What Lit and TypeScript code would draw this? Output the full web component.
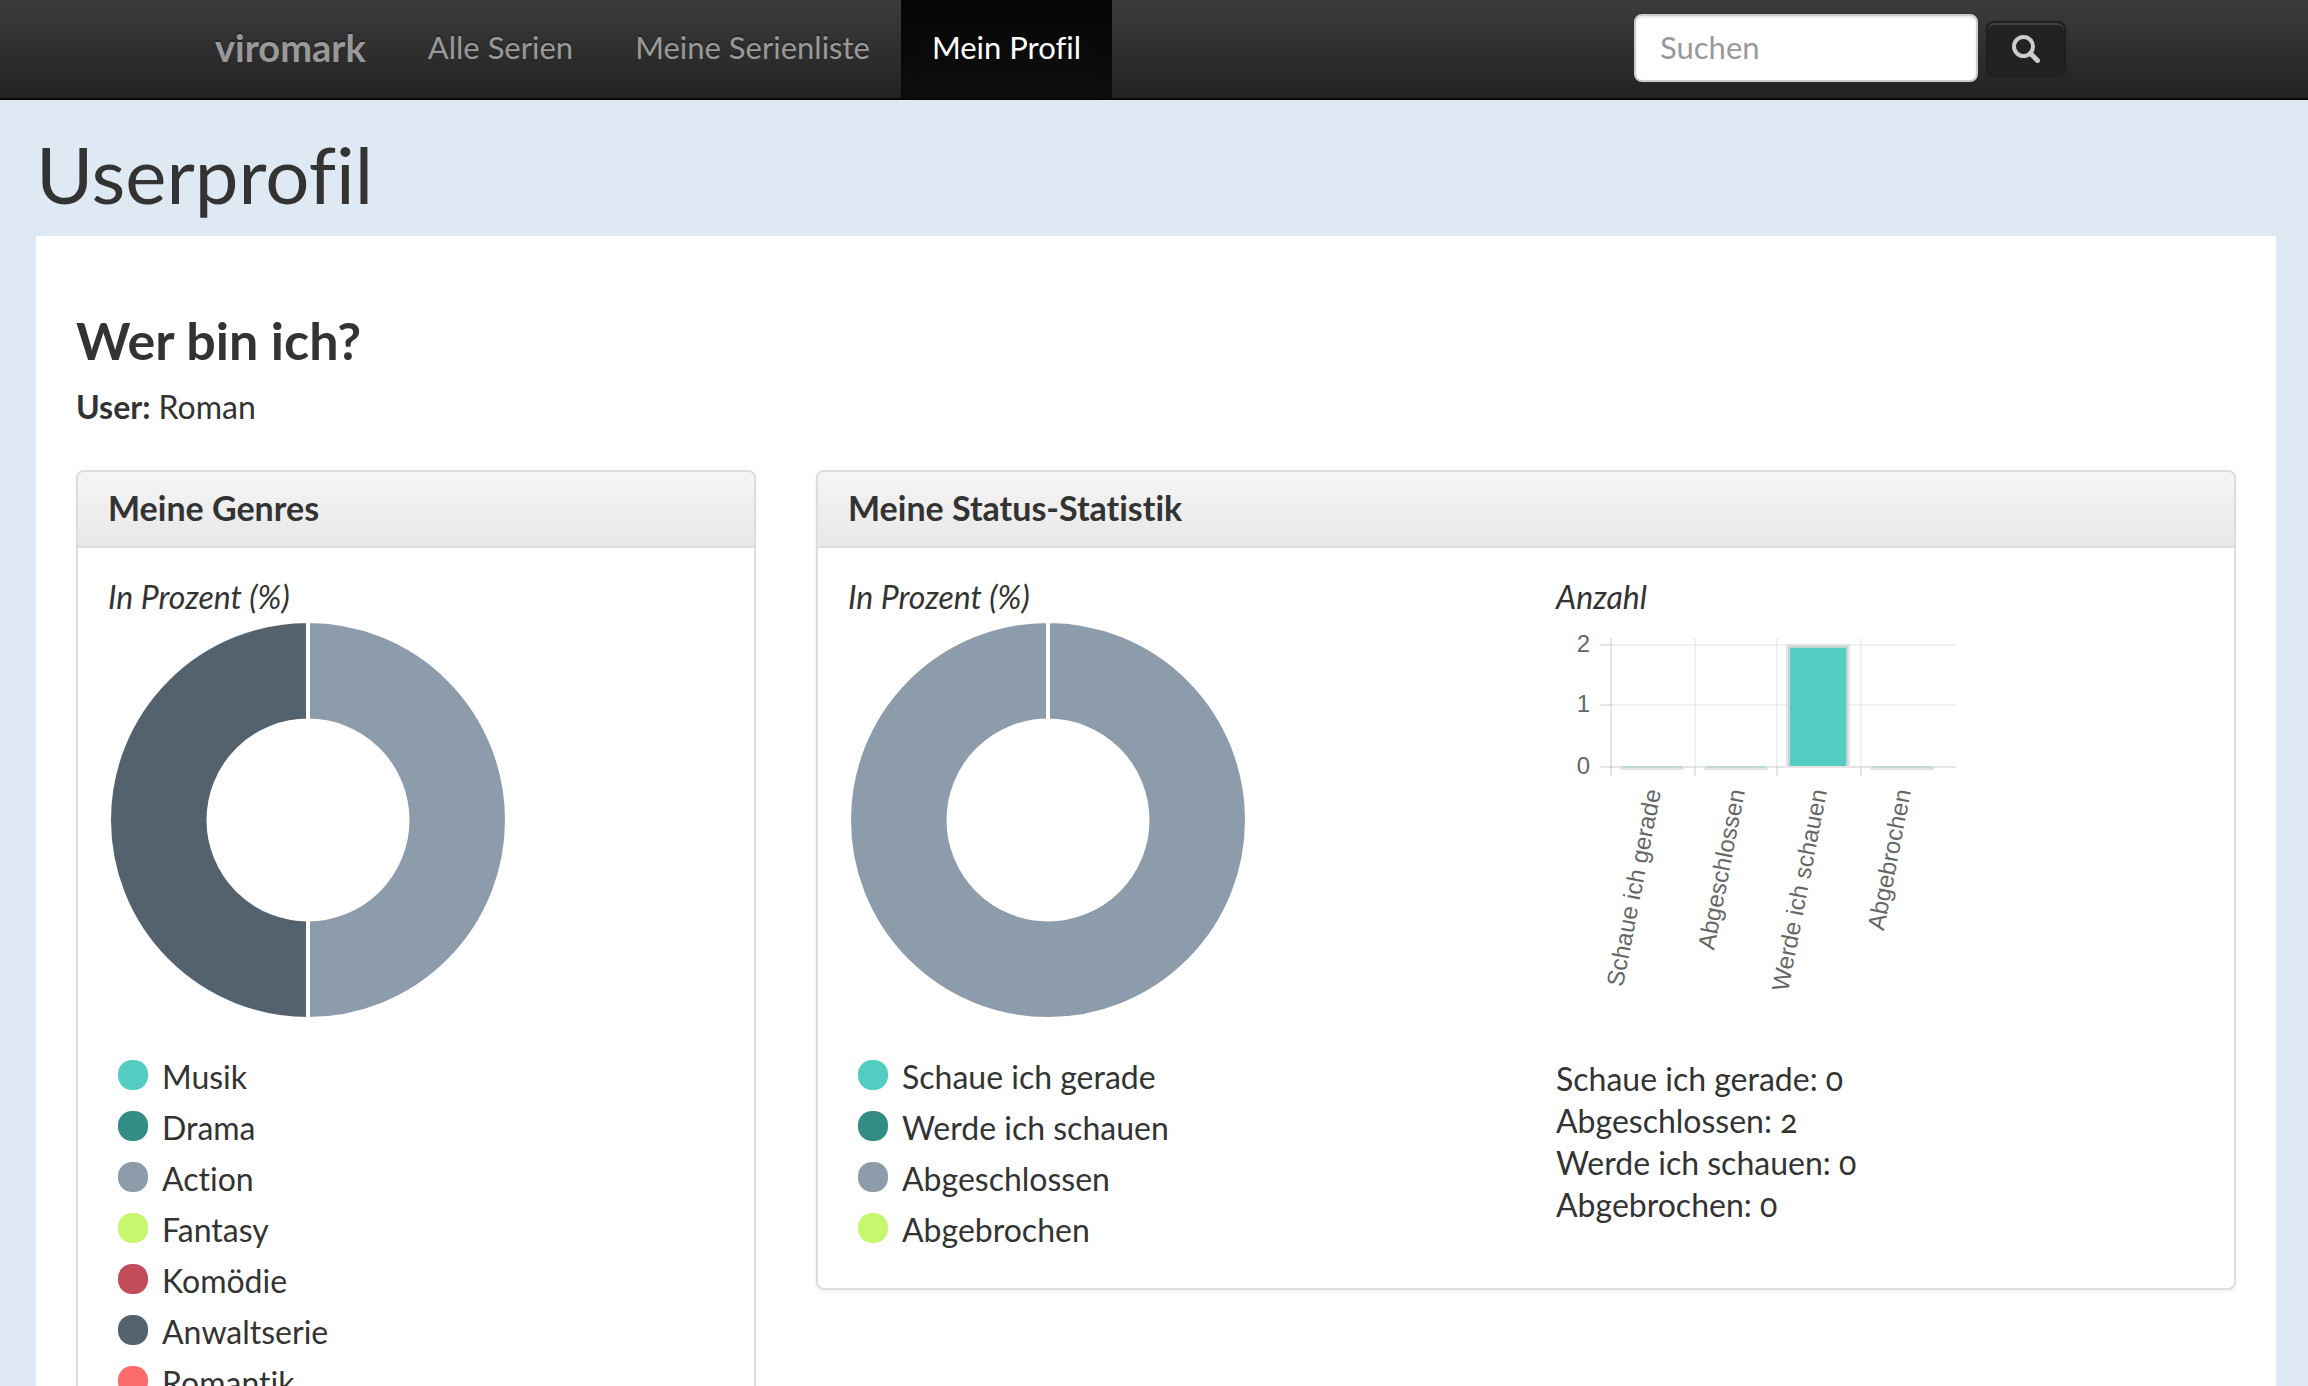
import { LitElement, html, svg, css } from "lit";
import { customElement, property } from "lit/decorators.js";

interface Segment {
  label: string;
  value: number;
  color: string;
}

const GENRES: Segment[] = [
  { label: "Musik", value: 0, color: "#53cdc2" },
  { label: "Drama", value: 0, color: "#338d85" },
  { label: "Action", value: 1, color: "#8c9cab" },
  { label: "Fantasy", value: 0, color: "#c7f76f" },
  { label: "Komödie", value: 0, color: "#c24c59" },
  { label: "Anwaltserie", value: 1, color: "#54626d" },
  { label: "Romantik", value: 0, color: "#fd6c6c" },
];

const STATUS: Segment[] = [
  { label: "Schaue ich gerade", value: 0, color: "#53cdc2" },
  { label: "Werde ich schauen", value: 0, color: "#338d85" },
  { label: "Abgeschlossen", value: 2, color: "#8c9cab" },
  { label: "Abgebrochen", value: 0, color: "#c7f76f" },
];

const COUNTS = [
  { label: "Schaue ich gerade", value: 0 },
  { label: "Abgeschlossen", value: 2 },
  { label: "Werde ich schauen", value: 0 },
  { label: "Abgebrochen", value: 0 },
];

const BARS = [
  { label: "Schaue ich gerade", value: 0 },
  { label: "Abgeschlossen", value: 0 },
  { label: "Werde ich schauen", value: 2 },
  { label: "Abgebrochen", value: 0 },
];

@customElement("donut-chart")
export class DonutChart extends LitElement {
  @property({ attribute: false }) segments: Segment[] = [];

  static styles = css`
    :host { display: block; }
    .donut { display: block; width: 400px; max-width: 100%; height: auto; }
    .slice { stroke: #fff; stroke-width: 4; }
  `;

  private slice(from: number, to: number, color: string) {
    const at = (r: number, t: number) =>
      `${200 + r * Math.sin(t * 2 * Math.PI)} ${200 - r * Math.cos(t * 2 * Math.PI)}`;
    const outer = 199;
    const inner = 99.5;
    const mid = (from + to) / 2;
    const d =
      `M${at(outer, from)}A${outer} ${outer} 0 0 1 ${at(outer, mid)}` +
      `A${outer} ${outer} 0 0 1 ${at(outer, to)}L${at(inner, to)}` +
      `A${inner} ${inner} 0 0 0 ${at(inner, mid)}A${inner} ${inner} 0 0 0 ${at(inner, from)}Z`;
    return svg`<path class="slice" d=${d} fill=${color}></path>`;
  }

  render() {
    const total = this.segments.reduce((sum, s) => sum + s.value, 0);
    let pos = 0;
    return html`<svg class="donut" viewBox="0 0 400 400" aria-hidden="true">
      ${this.segments
        .filter((s) => s.value > 0)
        .map((s) => {
          const from = pos;
          pos += s.value / total;
          return this.slice(from, pos, s.color);
        })}
    </svg>`;
  }
}

@customElement("bar-chart")
export class BarChart extends LitElement {
  static styles = css`
    :host { display: block; }
    .chart { display: block; width: 400px; max-width: 100%; height: auto; }
    .label { font: 24px "Liberation Sans", Arial, sans-serif; fill: #666; text-anchor: end; }
    .grid { stroke: rgba(0, 0, 0, 0.05); stroke-width: 2; }
    .axis { stroke: rgba(0, 0, 0, 0.1); stroke-width: 2; }
    .bar { fill: #53cdc2; stroke: rgba(220, 220, 220, 0.8); stroke-width: 4; }
  `;

  render() {
    const ys = [147, 85, 25];
    const xs = [55, 139, 221, 305];
    return html`<svg class="chart" viewBox="0 0 400 400" aria-hidden="true">
      ${ys.map(
        (y, i) => svg`
          <text class="label" x="34" y=${y + 7}>${i}</text>
          <line class=${i ? "grid" : "axis"} x1="54" x2="400" y1=${y} y2=${y}></line>
          <line class="axis" x1="44" x2="54" y1=${y} y2=${y}></line>`
      )}
      ${xs.map(
        (x, i) => svg`
          <line class=${i ? "grid" : "axis"} x1=${x} x2=${x} y1="18" y2="148"></line>
          <line class="axis" x1=${x} x2=${x} y1="148" y2="156"></line>`
      )}
      ${BARS.map((b, i) => {
        const left = xs[i] + 11;
        const top = 148 - b.value * 61;
        return svg`
          <path class="bar" d="M${left} 146V${top}H${left + 60}V146"></path>
          <text class="label" transform="translate(${xs[i] + 50} 171) rotate(-79)">${b.label}</text>`;
      })}
    </svg>`;
  }
}

@customElement("app-root")
export class AppRoot extends LitElement {
  static styles = css`
    :host {
      display: block;
      height: 100vh;
      overflow: hidden;
      background: #dfe9f3;
      color: #333;
      font-family: Lato, "Open Sans", sans-serif;
      font-size: 32px;
      line-height: 42px;
      font-variant-numeric: oldstyle-nums;
      font-variant-ligatures: no-common-ligatures;
    }
    *, *::before, *::after { box-sizing: border-box; }
    h1, h2, h3, p, ul { margin: 0; padding: 0; }
    ul { list-style: none; }

    .navbar {
      background: linear-gradient(#3c3c3c, #222);
      border-bottom: 2px solid #080808;
    }
    .bar {
      display: flex;
      align-items: stretch;
      max-width: 1940px;
      height: 98px;
      margin: 0 auto;
      padding-right: 58px;
    }
    .links { display: flex; flex: 1; }
    .brand, .link {
      display: flex;
      align-items: center;
      padding: 0 31px 4px;
      color: #999;
      font-size: 31px;
      text-decoration: none;
      text-shadow: 0 -2px 0 rgba(0, 0, 0, 0.25);
      white-space: nowrap;
    }
    .brand { font-size: 38px; font-weight: 700; }
    .link.active {
      color: #fff;
      background: linear-gradient(#050505, #0f0f0f);
      box-shadow: inset 0 6px 18px rgba(0, 0, 0, 0.25);
    }
    .search { display: flex; align-items: center; gap: 8px; }
    .query {
      width: 344px;
      height: 68px;
      margin-bottom: 2px;
      padding: 0 24px 2px;
      border: 2px solid #ccc;
      border-radius: 8px;
      background: #fff;
      box-shadow: inset 0 2px 2px rgba(0, 0, 0, 0.075);
      color: #555;
      font: inherit;
      font-size: 31px;
    }
    .query::placeholder { color: #999; opacity: 1; }
    .go {
      display: flex;
      align-items: center;
      justify-content: center;
      width: 80px;
      height: 56px;
      padding: 0;
      border: 2px solid #1f1f1f;
      border-radius: 8px;
      background: #222;
      box-shadow: inset 0 2px 0 rgba(255, 255, 255, 0.15), 0 2px 4px rgba(0, 0, 0, 0.08);
    }
    .glass { display: block; width: 28px; height: 28px; }

    .page { padding: 0 32px 0 36px; }
    .title {
      padding: 34px 0 22px;
      font-size: 78px;
      line-height: 80px;
      font-weight: 400;
    }
    .sheet { min-height: 1150px; padding: 78px 40px; background: #fff; }
    .who { font-size: 52px; line-height: 52px; font-weight: 700; }
    .user { padding: 20px 0 42px; }

    .panels {
      display: grid;
      grid-template-columns: 680fr 1420fr;
      gap: 60px;
      align-items: start;
    }
    .panel {
      border: 2px solid #ddd;
      border-radius: 8px;
      background: #fff;
      box-shadow: 0 2px 4px rgba(0, 0, 0, 0.05);
    }
    .head {
      padding: 15px 30px 17px;
      border-bottom: 2px solid #ddd;
      border-radius: 6px 6px 0 0;
      background: linear-gradient(#f5f5f5, #e8e8e8);
      font-size: 34px;
      line-height: 42px;
      font-weight: 700;
    }
    .body { display: grid; grid-template-columns: 1fr; padding: 28px 0 30px; }
    .body.two { grid-template-columns: 1fr 1fr; }
    .col { padding: 0 30px; }
    .caption { padding-bottom: 2px; font-style: italic; }
    .legend { padding: 31px 10px 3px; }
    .entry { display: flex; align-items: center; gap: 14px; height: 51px; }
    .dot { width: 30px; height: 30px; margin-bottom: 4px; border-radius: 14px; }
    .counts { padding-top: 38px; }
  `;

  private legend(items: Segment[]) {
    return html`<ul class="legend">
      ${items.map(
        (s) => html`<li class="entry">
          <span class="dot" style="background:${s.color}"></span><span>${s.label}</span>
        </li>`
      )}
    </ul>`;
  }

  render() {
    return html`
      <header class="navbar">
        <div class="bar">
          <nav class="links">
            <a class="brand" href="#">viromark</a>
            <a class="link" href="#serien">Alle Serien</a>
            <a class="link" href="#liste">Meine Serienliste</a>
            <a class="link active" href="#profil" aria-current="page">Mein Profil</a>
          </nav>
          <form class="search" role="search">
            <input class="query" type="text" placeholder="Suchen" aria-label="Suchen" />
            <button class="go" type="button" aria-label="Suchen">
              <svg class="glass" viewBox="0 0 28 28" fill="none" stroke="#ccc" aria-hidden="true">
                <circle cx="11.5" cy="11.5" r="9.5" stroke-width="4"></circle>
                <path d="M18.5 18.5L25.5 25.5" stroke-width="5" stroke-linecap="round"></path>
              </svg>
            </button>
          </form>
        </div>
      </header>
      <main class="page">
        <h1 class="title">Userprofil</h1>
        <section class="sheet">
          <h2 class="who">Wer bin ich?</h2>
          <p class="user"><strong>User:</strong> Roman</p>
          <div class="panels">
            <section class="panel">
              <h3 class="head">Meine Genres</h3>
              <div class="body">
                <div class="col">
                  <p class="caption">In Prozent (%)</p>
                  <donut-chart .segments=${GENRES}></donut-chart>
                  ${this.legend(GENRES)}
                </div>
              </div>
            </section>
            <section class="panel">
              <h3 class="head">Meine Status-Statistik</h3>
              <div class="body two">
                <div class="col">
                  <p class="caption">In Prozent (%)</p>
                  <donut-chart .segments=${STATUS}></donut-chart>
                  ${this.legend(STATUS)}
                </div>
                <div class="col">
                  <p class="caption">Anzahl</p>
                  <bar-chart></bar-chart>
                  <div class="counts">
                    ${COUNTS.map((c) => html`<p>${c.label}: ${c.value}</p>`)}
                  </div>
                </div>
              </div>
            </section>
          </div>
        </section>
      </main>
    `;
  }
}
